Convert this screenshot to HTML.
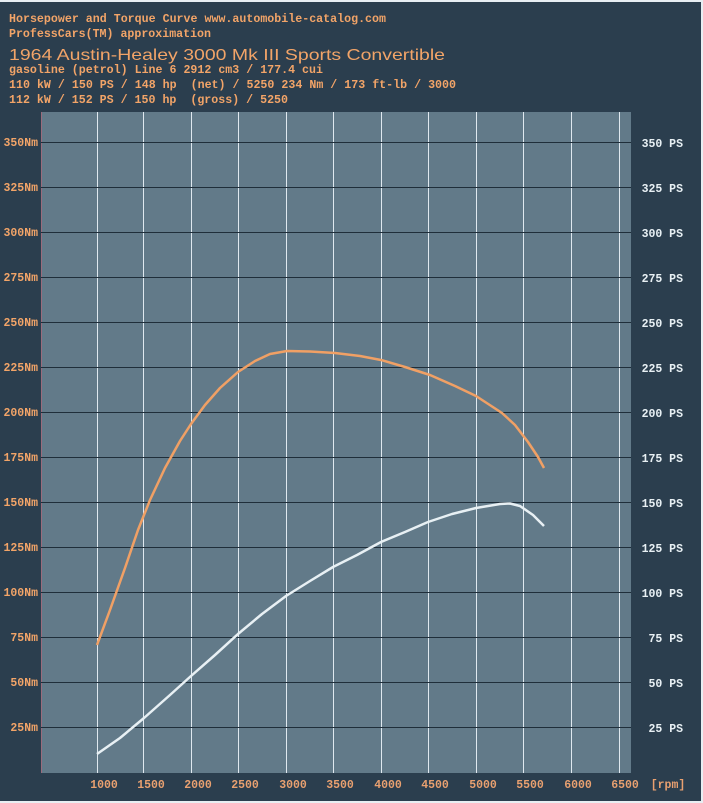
<!DOCTYPE html>
<html><head><meta charset="utf-8"><style>
html,body{margin:0;padding:0;background:#2b3e4e;}
svg{display:block}
text{font-family:"Liberation Mono",monospace;font-weight:bold;font-size:11.5px;white-space:pre}
</style></head><body>
<svg width="703" height="803" viewBox="0 0 703 803" xmlns="http://www.w3.org/2000/svg" xml:space="preserve">
<rect x="0" y="0" width="703" height="803" fill="#2b3e4e"/>
<rect x="0" y="0" width="703" height="2" fill="#e8eef2"/>
<rect x="0" y="801" width="703" height="2" fill="#e8eef2"/>
<rect x="701" y="0" width="2" height="803" fill="#e8eef2"/>
<g fill="#f2a468">
<text x="9" y="22" textLength="377" lengthAdjust="spacingAndGlyphs">Horsepower and Torque Curve www.automobile-catalog.com</text>
<text x="9" y="37" textLength="202" lengthAdjust="spacingAndGlyphs">ProfessCars(TM) approximation</text>
<text x="9" y="60" textLength="436" lengthAdjust="spacingAndGlyphs" style="font-family:'Liberation Sans',sans-serif;font-weight:normal;font-size:16px">1964 Austin-Healey 3000 Mk III Sports Convertible</text>
<text x="9" y="73" textLength="314" lengthAdjust="spacingAndGlyphs">gasoline (petrol) Line 6 2912 cm3 / 177.4 cui</text>
<text x="9" y="88" textLength="447" lengthAdjust="spacingAndGlyphs">110 kW / 150 PS / 148 hp  (net) / 5250 234 Nm / 173 ft-lb / 3000</text>
<text x="9" y="103" textLength="279" lengthAdjust="spacingAndGlyphs">112 kW / 152 PS / 150 hp  (gross) / 5250</text>
</g>
<rect x="41" y="112" width="590" height="661" fill="#627a89"/>
<rect x="41" y="112" width="1" height="661" fill="#9a6c7c"/>
<g stroke="#dfe8ef" stroke-width="1">
<line x1="97.5" y1="112" x2="97.5" y2="773"/><line x1="143.5" y1="112" x2="143.5" y2="773"/><line x1="191.5" y1="112" x2="191.5" y2="773"/><line x1="238.5" y1="112" x2="238.5" y2="773"/><line x1="286.5" y1="112" x2="286.5" y2="773"/><line x1="333.5" y1="112" x2="333.5" y2="773"/><line x1="381.5" y1="112" x2="381.5" y2="773"/><line x1="428.5" y1="112" x2="428.5" y2="773"/><line x1="476.5" y1="112" x2="476.5" y2="773"/><line x1="523.5" y1="112" x2="523.5" y2="773"/><line x1="571.5" y1="112" x2="571.5" y2="773"/><line x1="619.5" y1="112" x2="619.5" y2="773"/>
</g>
<g stroke="#1f2e3a" stroke-width="1">
<line x1="41" y1="142.5" x2="631" y2="142.5"/><line x1="41" y1="187.5" x2="631" y2="187.5"/><line x1="41" y1="232.5" x2="631" y2="232.5"/><line x1="41" y1="277.5" x2="631" y2="277.5"/><line x1="41" y1="322.5" x2="631" y2="322.5"/><line x1="41" y1="367.5" x2="631" y2="367.5"/><line x1="41" y1="412.5" x2="631" y2="412.5"/><line x1="41" y1="457.5" x2="631" y2="457.5"/><line x1="41" y1="502.5" x2="631" y2="502.5"/><line x1="41" y1="547.5" x2="631" y2="547.5"/><line x1="41" y1="592.5" x2="631" y2="592.5"/><line x1="41" y1="637.5" x2="631" y2="637.5"/><line x1="41" y1="682.5" x2="631" y2="682.5"/><line x1="41" y1="727.5" x2="631" y2="727.5"/>
</g>
<polyline fill="none" stroke="#f0a065" stroke-width="2.5" stroke-linejoin="round" points="97,645 110,610 125,568 138,530 150,500 165,468 180,441 191,424 205,405 220,388 238,372 255,361 270,354 287,351 310,351.5 335,353 360,356 381,360 405,367 430,375 455,386 476,396 502,413 515,425 528,442 538,457 544,468"/>
<polyline fill="none" stroke="#e8f0f4" stroke-width="2.5" stroke-linejoin="round" points="97,754 120,738 144,718 170,695 191,676 215,655 238,634 262,614 286,596 310,581 333,567 357,555 381,542 405,532 428,522 452,514 476,508 500,504 510,503.5 520,506 533,515 544,526"/>
<g fill="#f2a468" text-anchor="end">
<text x="38" y="146">350Nm</text><text x="38" y="191">325Nm</text><text x="38" y="236">300Nm</text><text x="38" y="281">275Nm</text><text x="38" y="326">250Nm</text><text x="38" y="371">225Nm</text><text x="38" y="416">200Nm</text><text x="38" y="461">175Nm</text><text x="38" y="506">150Nm</text><text x="38" y="551">125Nm</text><text x="38" y="596">100Nm</text><text x="38" y="641">75Nm</text><text x="38" y="686">50Nm</text><text x="38" y="731">25Nm</text>
</g>
<g fill="#e8f0f4" text-anchor="end">
<text x="683" y="147">350 PS</text><text x="683" y="192">325 PS</text><text x="683" y="237">300 PS</text><text x="683" y="282">275 PS</text><text x="683" y="327">250 PS</text><text x="683" y="372">225 PS</text><text x="683" y="417">200 PS</text><text x="683" y="462">175 PS</text><text x="683" y="507">150 PS</text><text x="683" y="552">125 PS</text><text x="683" y="597">100 PS</text><text x="683" y="642">75 PS</text><text x="683" y="687">50 PS</text><text x="683" y="732">25 PS</text>
</g>
<g fill="#e8a070" text-anchor="middle" style="font-family:'Liberation Sans',sans-serif;font-weight:normal;font-size:12px">
<text x="104" y="788">1000</text><text x="151" y="788">1500</text><text x="198" y="788">2000</text><text x="245" y="788">2500</text><text x="293" y="788">3000</text><text x="340" y="788">3500</text><text x="388" y="788">4000</text><text x="435" y="788">4500</text><text x="483" y="788">5000</text><text x="530" y="788">5500</text><text x="578" y="788">6000</text><text x="625" y="788">6500</text><text x="668" y="788">[rpm]</text>
</g>
</svg>
</body></html>
